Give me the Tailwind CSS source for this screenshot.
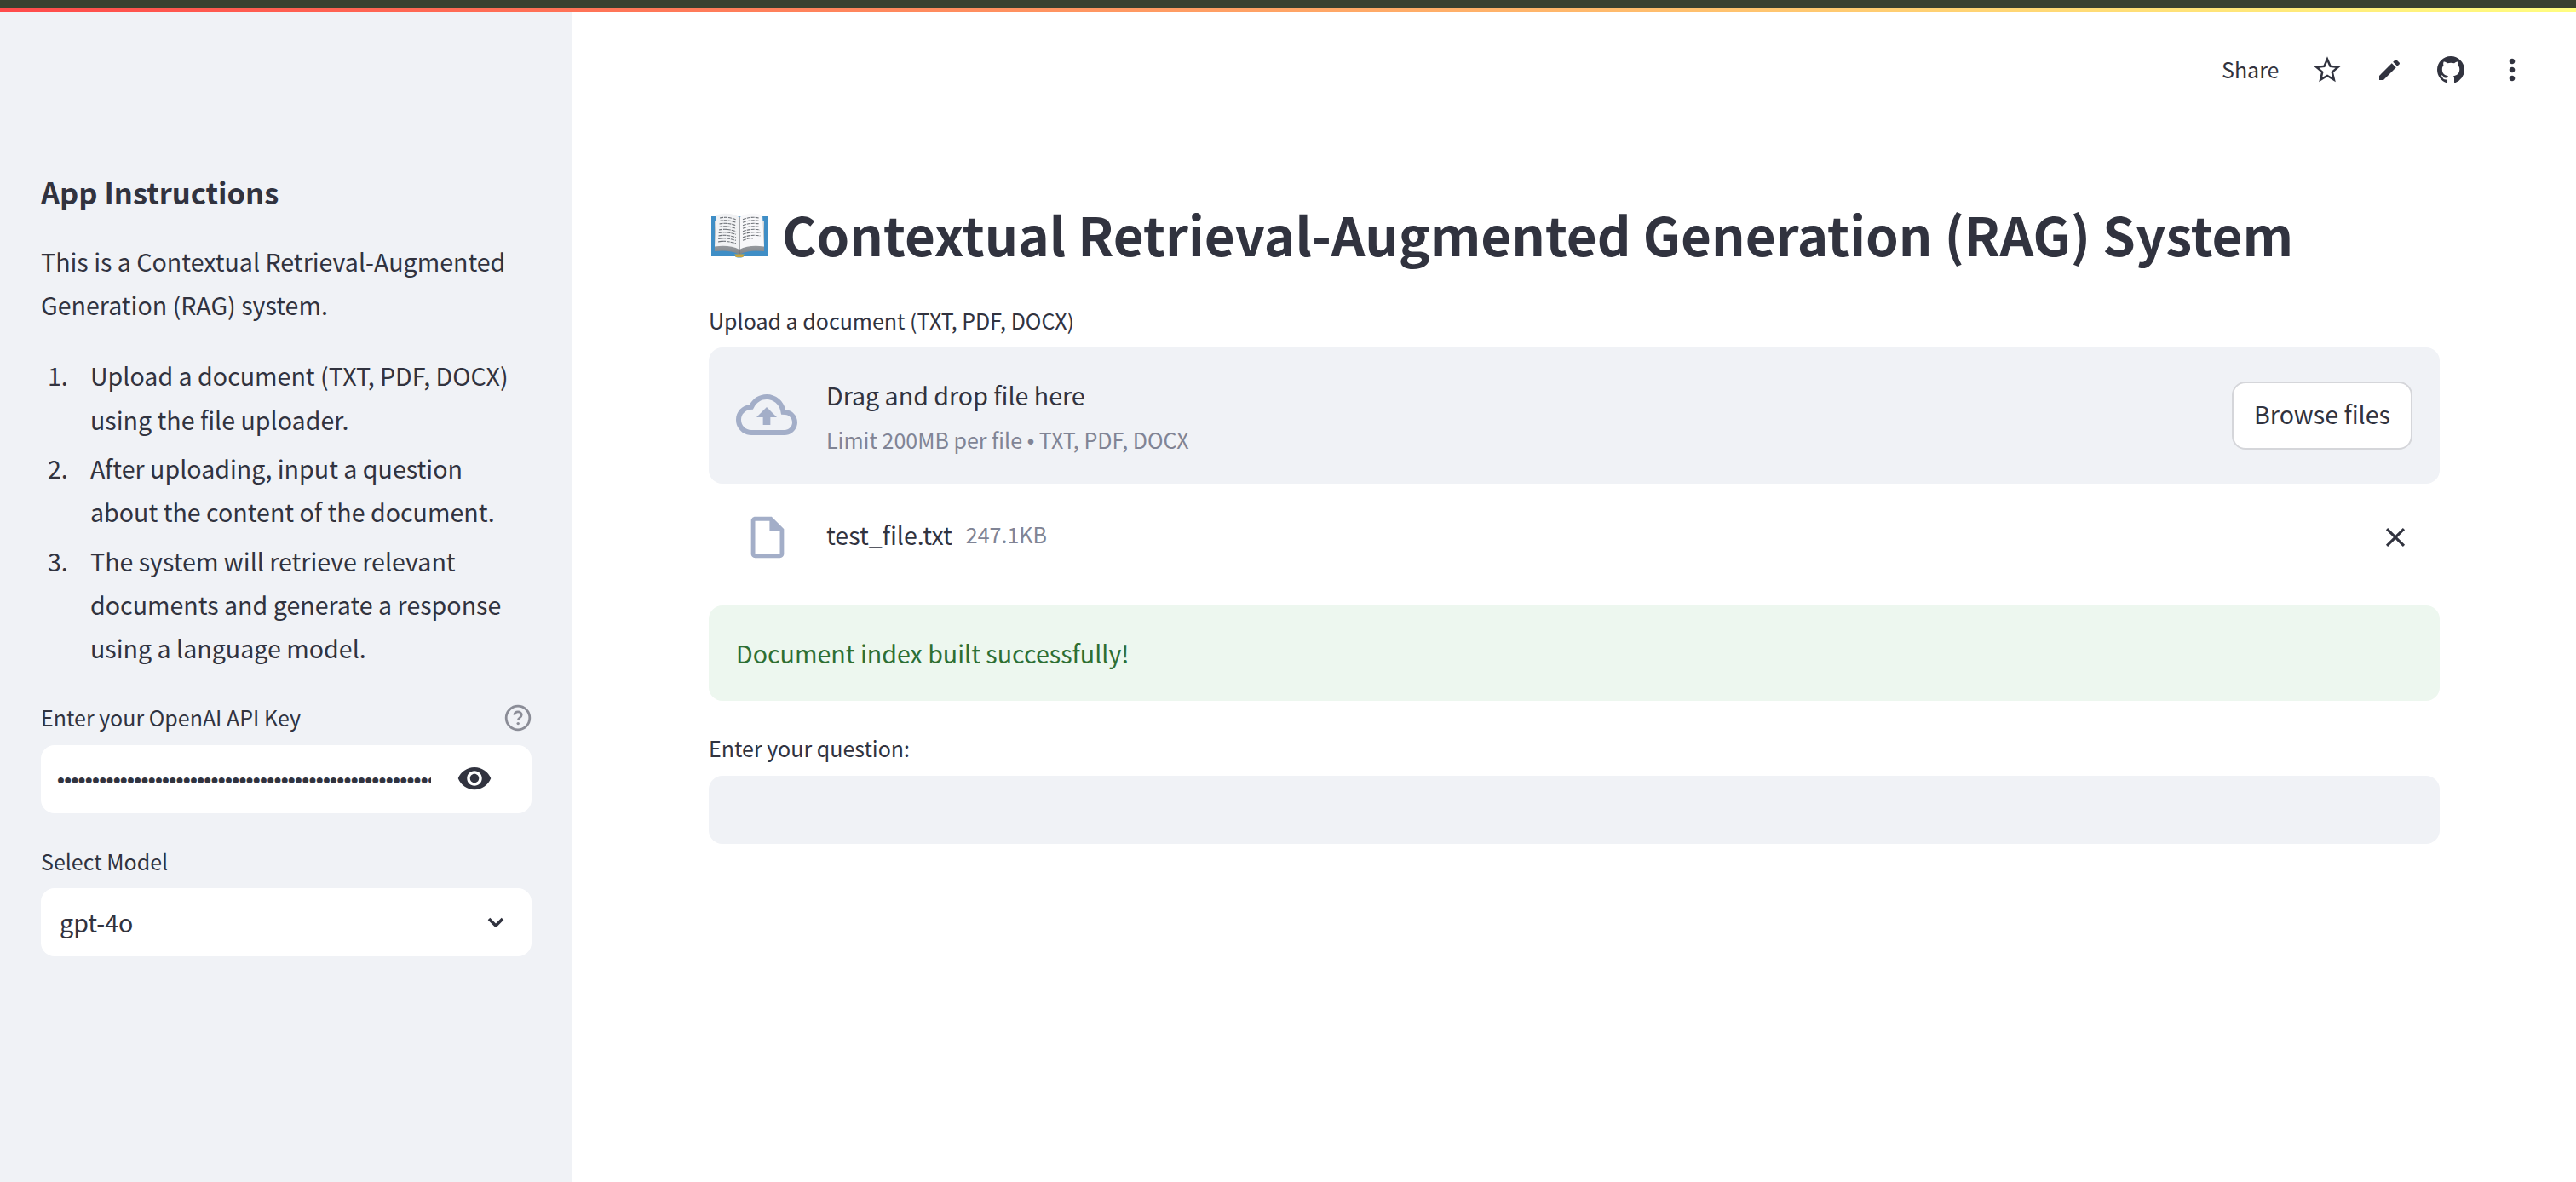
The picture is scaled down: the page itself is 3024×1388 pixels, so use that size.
<!DOCTYPE html>
<html lang="en">
<head>
<meta charset="utf-8">
<title>Contextual RAG System</title>
<script src="https://cdn.jsdelivr.net/npm/@tailwindcss/browser@4"></script>
</head>
<body class="m-0 bg-white text-[#31333f] font-['Noto_Sans_CJK_SC','Noto_Sans',sans-serif] overflow-hidden">
<div class="flex flex-col w-[3024px] h-[1388px]">
  <div class="h-[14px] shrink-0 flex flex-col">
    <div class="h-[9px] bg-[#3a4130]"></div>
    <div class="h-[5px] bg-[linear-gradient(90deg,#ff4b4b,#fffd80)]"></div>
  </div>
  <div class="flex flex-1 min-h-0">
    <aside class="w-[672px] shrink-0 bg-[#f0f2f6] px-[48px] pt-[181px]">
      <h3 class="h-[60px] leading-[60px] text-[34.5px] font-semibold">App Instructions</h3>
      <p class="mt-[26px] text-[28.6px] leading-[51.2px]">This is a Contextual Retrieval-Augmented Generation (RAG) system.</p>
      <ol class="mt-[32px] text-[28.6px] leading-[51.2px] flex flex-col gap-[6.4px]">
        <li class="flex"><span class="w-[58px] pl-[8px] shrink-0">1.</span><span>Upload a document (TXT, PDF, DOCX) using the file uploader.</span></li>
        <li class="flex"><span class="w-[58px] pl-[8px] shrink-0">2.</span><span>After uploading, input a question about the content of the document.</span></li>
        <li class="flex"><span class="w-[58px] pl-[8px] shrink-0">3.</span><span>The system will retrieve relevant documents and generate a response using a language model.</span></li>
      </ol>
      <div class="mt-[38.4px] h-[36px] flex items-center justify-between text-[25px]">
        <span>Enter your OpenAI API Key</span>
        <svg class="w-[32px] h-[32px]" viewBox="0 0 32 32" fill="none"><circle cx="16" cy="16" r="13.8" stroke="#8b8d97" stroke-width="2.8"/><path d="M11.8 12.6c.3-2.3 2-3.7 4.3-3.7 2.4 0 4.2 1.5 4.2 3.6 0 3.2-4.1 3.3-4.1 6.2" stroke="#8b8d97" stroke-width="2.6"/><circle cx="16.2" cy="22.6" r="1.7" fill="#8b8d97"/></svg>
      </div>
      <div class="mt-[14px] h-[80px] bg-white rounded-[16px] flex items-center pl-[19px]">
        <input type="password" readonly value="sk-proj-abcdefghijklmnopqrstuvwxyz0123456789abcdefghijklmnopqrstuvwxyz" class="w-[439px] mt-[2px] bg-transparent outline-none text-[25.5px] tracking-[-0.72px] text-[#31333f] font-['Liberation_Sans',sans-serif]">
        <svg class="ml-[30px] w-[42px] h-[42px] -mt-[2px]" viewBox="0 0 24 24" fill="#31333f"><path d="M12 4.5C7 4.5 2.73 7.61 1 12c1.73 4.39 6 7.5 11 7.5s9.27-3.11 11-7.5c-1.73-4.39-6-7.5-11-7.5zM12 17c-2.76 0-5-2.24-5-5s2.24-5 5-5 5 2.24 5 5-2.24 5-5 5zm0-8c-1.66 0-3 1.34-3 3s1.34 3 3 3 3-1.34 3-3-1.34-3-3-3z"/></svg>
      </div>
      <div class="mt-[39px] h-[36px] flex items-center text-[25px]">Select Model</div>
      <div class="mt-[13px] h-[80px] bg-white rounded-[16px] flex items-center justify-between pl-[22px] pr-[32px] text-[28.6px]">
        <span>gpt-4o</span>
        <svg class="w-[20px] h-[12px]" viewBox="0 0 20 12" fill="none"><path d="M2 2l8 8 8-8" stroke="#31333f" stroke-width="3.6"/></svg>
      </div>
    </aside>
    <main class="flex-1 min-w-0 px-[160px]">
      <div class="h-[136px] relative">
        <div class="absolute right-[-105px] top-0 h-full flex items-center">
          <span class="text-[25px] w-[66px]">Share</span>
          <svg class="ml-[39px] w-[38px] h-[38px]" viewBox="0 0 24 24" fill="#31333f"><path d="M22 9.24l-7.19-.62L12 2 9.19 8.63 2 9.24l5.46 4.73L5.82 21 12 17.27 18.18 21l-1.63-7.03L22 9.24zM12 15.4l-3.76 2.27 1-4.28-3.32-2.88 4.38-.38L12 6.1l1.71 4.04 4.38.38-3.32 2.88 1 4.28L12 15.4z"/></svg>
          <svg class="ml-[38px] w-[32px] h-[32px]" viewBox="0 0 24 24" fill="#31333f"><path d="M3 17.25V21h3.75L17.81 9.94l-3.75-3.75L3 17.25zM20.71 7.04c.39-.39.39-1.02 0-1.41l-2.34-2.34c-.39-.39-1.02-.39-1.41 0l-1.83 1.83 3.75 3.75 1.83-1.83z"/></svg>
          <svg class="ml-[40px] w-[32px] h-[32px]" viewBox="0 0 16 16" fill="#31333f"><path d="M8 0C3.58 0 0 3.58 0 8c0 3.54 2.29 6.53 5.47 7.59.4.07.55-.17.55-.38 0-.19-.01-.82-.01-1.49-2.01.37-2.53-.49-2.69-.94-.09-.23-.48-.94-.82-1.13-.28-.15-.68-.52-.01-.53.63-.01 1.08.58 1.23.82.72 1.21 1.87.87 2.33.66.07-.52.28-.87.51-1.07-1.78-.2-3.64-.89-3.64-3.95 0-.87.31-1.59.82-2.15-.08-.2-.36-1.02.08-2.12 0 0 .67-.21 2.2.82.64-.18 1.32-.27 2-.27.68 0 1.36.09 2 .27 1.53-1.04 2.2-.82 2.2-.82.44 1.1.16 1.92.08 2.12.51.56.82 1.27.82 2.15 0 3.07-1.87 3.75-3.65 3.95.29.25.54.73.54 1.48 0 1.07-.01 1.93-.01 2.2 0 .21.15.46.55.38A8.013 8.013 0 0016 8c0-4.42-3.58-8-8-8z"/></svg>
          <svg class="ml-[36px] w-[40px] h-[40px]" viewBox="0 0 24 24" fill="#31333f"><path d="M12 8c1.1 0 2-.9 2-2s-.9-2-2-2-2 .9-2 2 .9 2 2 2zm0 2c-1.1 0-2 .9-2 2s.9 2 2 2 2-.9 2-2-.9-2-2-2zm0 6c-1.1 0-2 .9-2 2s.9 2 2 2 2-.9 2-2-.9-2-2-2z"/></svg>
        </div>
      </div>
      <h1 class="mt-[74px] h-[100px] flex items-center text-[61.9px] font-semibold whitespace-nowrap">
        <svg class="ml-[3px] mr-[17px] mt-[4px] w-[66px] h-[54px] shrink-0" viewBox="0 0 66 54">
          <defs>
            <linearGradient id="edge" x1="0" y1="0" x2="0" y2="1"><stop offset="0" stop-color="#d9dbde"/><stop offset="1" stop-color="#7f8388"/></linearGradient>
          </defs>
          <path d="M0 5h66v47H38c-1 2-9 2-10 0H0z" fill="#3f8ec6"/>
          <path d="M4 46V10L33 12v38C24 45 14 45 4 46z" fill="url(#edge)"/>
          <path d="M62 46V10L33 12v38c9-5 19-5 29-4z" fill="url(#edge)"/>
          <path d="M6 3.5c10-3 20-2 27 2.5v38c-8-4-17-5-29-3.5z" fill="#f1f2f4"/>
          <path d="M60 3.5c-10-3-20-2-27 2.5v38c8-4 17-5 29-3.5z" fill="#f8f8fa"/>
          <path d="M32.4 6h1.2v44h-1.2z" fill="#70747a"/>
          <path d="M10 7c7-1.500 13-.5 19 1.800M9.700 10.500c7-1.500 13-.5 19.300 1.800M9.500 14c7-1.500 13-.5 19.500 1.800M9.200 17.500c7-1.500 13-.5 19.800 1.800M9 21c7-1.500 13-.5 20 1.800M8.700 24.500c7-1.500 13-.5 20.300 1.800M8.500 28c7-1.500 13-.5 20.500 1.800M8.200 31.500c7-1.500 13-.5 20.800 1.800M8 35c7-1.500 13-.5 21 1.800M37 8.800c6-2.300 12-3.300 19-1.800M37 12.300c6-2.300 12.300-3.300 19.300-1.800M37 15.800c6-2.300 12.500-3.300 19.500-1.800M37 19.300c6-2.300 12.800-3.300 19.800-1.800M37 22.800c6-2.300 13-3.300 20-1.800M37 26.300c6-2.300 13.300-3.300 20.300-1.800M37 29.800c6-2.300 13.500-3.300 20.500-1.800M37 33.300c6-2.300 8-2.800 12-2.400" fill="none" stroke="#6d7177" stroke-width="1.1" stroke-dasharray="4 1"/>
          <path d="M27 49.500h12l-2 3.500h-8z" fill="#c9a63e"/>
        </svg>
        Contextual Retrieval-Augmented Generation (RAG) System
      </h1>
      <div class="mt-[35px] h-[36px] flex items-center text-[25px]">Upload a document (TXT, PDF, DOCX)</div>
      <section class="mt-[13px] h-[160px] bg-[#f0f2f6] rounded-[16px] flex items-center px-[32px]">
        <svg class="w-[72px] h-[72px] shrink-0 mt-[-2px]" viewBox="0 0 24 24" fill="#a3aec8"><path d="M19.35 10.04C18.67 6.59 15.64 4 12 4 9.11 4 6.6 5.64 5.35 8.04 2.34 8.36 0 10.91 0 14c0 3.31 2.69 6 6 6h13c2.76 0 5-2.24 5-5 0-2.64-2.05-4.78-4.65-4.96zM19 18H6c-2.21 0-4-1.79-4-4 0-2.05 1.53-3.76 3.56-3.97l1.07-.11.5-.95C8.08 7.14 9.94 6 12 6c2.62 0 4.88 1.86 5.39 4.43l.3 1.5 1.53.11c1.56.1 2.78 1.41 2.78 2.96 0 1.65-1.35 3-3 3zM8 13h2.55v3h2.9v-3H16l-4-4z"/></svg>
        <div class="ml-[34px] mt-[6px] flex-1 flex flex-col gap-[2px]">
          <span class="text-[28.6px] leading-[50px]">Drag and drop file here</span>
          <span class="text-[25px] leading-[50px] text-[#808495]">Limit 200MB per file <span class="font-['Liberation_Sans'] text-[24px]">•</span> TXT, PDF, DOCX</span>
        </div>
        <button class="w-[212px] h-[80px] bg-white border-2 border-[#d5d6da] rounded-[16px] text-[28.6px] pb-[3px]">Browse files</button>
      </section>
      <section class="mt-[23px] h-[80px] flex items-center">
        <svg class="ml-[40px] w-[58px] h-[58px] shrink-0" viewBox="0 0 24 24" fill="#a3aec8"><path d="M14 2H6c-1.1 0-1.99.9-1.99 2L4 20c0 1.1.89 2 1.99 2H18c1.1 0 2-.9 2-2V8l-6-6zM6 20V4h7v5h5v11H6z"/></svg>
        <span class="ml-[40px] text-[28.6px] -mt-[6px]">test_file.txt</span>
        <span class="ml-[16px] text-[25px] text-[#808495] -mt-[6px]">247.1KB</span>
        <svg class="ml-auto mr-[33px] w-[38px] h-[38px]" viewBox="0 0 24 24" fill="#31333f"><path d="M19 6.41L17.59 5 12 10.59 6.41 5 5 6.41 10.59 12 5 17.59 6.41 19 12 13.41 17.59 19 19 17.59 13.41 12z"/></svg>
      </section>
      <div class="mt-[40px] h-[112px] bg-[#edf7ef] rounded-[16px] flex items-center px-[32px] text-[28.6px] text-[#2e6f33]">Document index built successfully!</div>
      <div class="mt-[38px] h-[36px] flex items-center text-[25px]">Enter your question:</div>
      <div class="mt-[14px] h-[80px] bg-[#f0f2f6] rounded-[16px]"></div>
    </main>
  </div>
</div>
</body>
</html>
